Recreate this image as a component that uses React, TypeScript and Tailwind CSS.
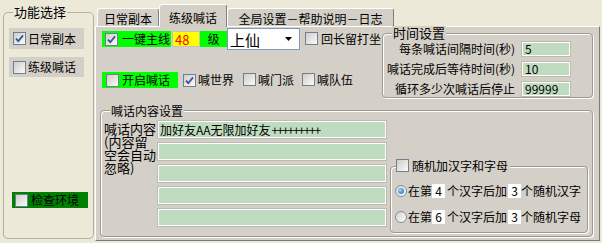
import React from "react";

const Check = ({ checked = false }: { checked?: boolean }) => (
  <span className="relative inline-flex w-[13px] h-[13px] shrink-0 items-center justify-center border border-[#6f8096] bg-linear-to-br from-[#cfcdc5] to-[#fbfbf9]">
    {checked && (
      <svg width="11" height="11" viewBox="0 0 11 11">
        <path d="M2 5.6 L4.3 8.2 L9 2.4" fill="none" stroke="#3550a0" strokeWidth="1.8" />
      </svg>
    )}
  </span>
);

const Radio = ({ on = false }: { on?: boolean }) => (
  <span className="inline-flex w-[12px] h-[12px] shrink-0 items-center justify-center rounded-full border border-[#7d8ea6] bg-linear-to-br from-[#d3d1c9] to-white">
    {on && <span className="w-[6px] h-[6px] rounded-full bg-[radial-gradient(circle_at_35%_35%,#9fd4ff,#1a5cb0)]" />}
  </span>
);

const Group = ({ className, children }: { className: string; children: React.ReactNode }) => (
  <div className={"relative border border-[#9d9a90] rounded-[4px] shadow-[inset_1px_1px_0_#fff,1px_1px_0_#fff] " + className}>
    {children}
  </div>
);

const timeRows = [
  { label: "每条喊话间隔时间(秒)", value: "5" },
  { label: "喊话完成后等待时间(秒)", value: "10" },
  { label: "循环多少次喊话后停止", value: "99999" },
];

const contentRows = ["加好友AA无限加好友", "", "", "", ""];

const randRows = [
  { on: true, a: "4", b: "3", tail: "个随机汉字" },
  { on: false, a: "6", b: "3", tail: "个随机字母" },
];

export default function App() {
  return (
    <div className="w-[602px] h-[243px] overflow-hidden bg-[#ECE9D8] flex text-[12px] leading-none text-black font-['Noto_Sans_CJK_SC','Noto_Sans',sans-serif]">
      {/* left: 功能选择 */}
      <div className="w-[95px] shrink-0 pl-[3px] pr-[1px] pt-[12px] pb-[4px] flex">
        <div className="relative flex-1 border border-[#b3b0a0] rounded-[5px] flex flex-col">
          <span className="absolute left-[9px] -top-[9px] px-[1px] bg-[#ECE9D8] text-[13px] leading-[16px]">功能选择</span>
          <div className="ml-[5px] mt-[15px] w-[75px] h-[21px] bg-[#D4D0C8] flex items-center pl-[4px] gap-[2px]">
            <Check checked />
            <span>日常副本</span>
          </div>
          <div className="ml-[5px] mt-[8px] w-[75px] h-[20px] bg-[#D4D0C8] flex items-center pl-[4px] gap-[2px]">
            <Check />
            <span>练级喊话</span>
          </div>
          <div className="ml-[8px] mt-auto mb-[30px] w-[76px] h-[16px] bg-[#008000] flex items-center pl-[3px] gap-[3px]">
            <Check />
            <span>检查环境</span>
          </div>
        </div>
      </div>

      {/* right: tabs */}
      <div className="w-[505px] shrink-0 flex flex-col pb-[2px]">
        <div className="h-[26px] flex items-end pl-[2px]">
          <div className="w-[62px] h-[18px] pt-[4px] flex justify-center bg-[#D4D0C8] border-t border-l border-white border-r border-r-[#808080] rounded-t-[3px]">
            日常副本
          </div>
          <div className="relative z-10 -mb-[1px] w-[68px] h-[23px] pt-[7px] flex justify-center bg-[#D4D0C8] border-t border-l border-white border-r border-r-[#808080] rounded-t-[3px]">
            练级喊话
          </div>
          <div className="w-[167px] h-[18px] pt-[4px] flex justify-center bg-[#D4D0C8] border-t border-l border-white border-r border-r-[#808080] rounded-t-[3px]">
            全局设置－帮助说明－日志
          </div>
        </div>

        <div className="flex-1 bg-[#D4D0C8] border border-t-white border-l-white border-r-[#7a7a7a] border-b-[#7a7a7a] flex flex-col">
          <div className="h-[83px] flex">
            <div className="w-[286px] pl-[6px] flex flex-col">
              <div className="mt-[1px] h-[22px] flex items-center">
                <div className="w-[69px] h-[16px] bg-[#00FF00] flex items-center pl-[3px] gap-[4px]">
                  <Check checked />
                  <span>一键主线</span>
                </div>
                <div className="ml-[1px] w-[28px] h-[16px] bg-[#FFFF00] border border-[#c4c2ba] text-[#FF0000] text-[13px] pl-[2px] flex items-center">48</div>
                <div className="w-[27px] h-[16px] bg-[#00FF00] flex items-center justify-center">级</div>
                <div className="w-[73px] h-[22px] bg-white border border-[#7F9DB9] flex items-center pl-[2px] text-[15px]">
                  <span>上仙</span>
                  <svg className="ml-auto mr-[7px]" width="7" height="4" viewBox="0 0 7 4">
                    <polygon points="0,0 7,0 3.5,4" fill="#000" />
                  </svg>
                </div>
                <span className="ml-[5px]"><Check /></span>
                <span className="ml-[3px]">回长留打坐</span>
              </div>
              <div className="mt-[22px] h-[16px] flex items-center">
                <div className="w-[76px] h-[16px] bg-[#00FF00] flex items-center pl-[4px] gap-[3px]">
                  <Check />
                  <span>开启喊话</span>
                </div>
                <span className="ml-[5px]"><Check checked /></span>
                <span className="ml-[2px]">喊世界</span>
                <span className="ml-[9px]"><Check /></span>
                <span className="ml-[2px]">喊门派</span>
                <span className="ml-[8px]"><Check /></span>
                <span className="ml-[2px]">喊队伍</span>
              </div>
            </div>

            <Group className="mt-[6px] w-[211px] h-[65px] pt-[8px] flex flex-col gap-[6px]">
              <span className="absolute left-[9px] -top-[8px] px-[1px] bg-[#D4D0C8] text-[13px] leading-[14px]">时间设置</span>
              {timeRows.map((r) => (
                <div key={r.label} className="h-[14px] flex items-center">
                  <span className="w-[132px] text-right">{r.label}</span>
                  <span className="ml-[7px] w-[48px] h-[14px] bg-[#C0DCC0] border border-white ring-1 ring-[#bdbab2] pl-[2px] flex items-center">{r.value}</span>
                </div>
              ))}
            </Group>
          </div>

          <Group className="ml-[4px] w-[493px] h-[127px] flex">
            <span className="absolute left-[9px] -top-[7px] px-[1px] bg-[#D4D0C8] leading-[13px]">喊话内容设置</span>
            <div className="w-[55px] pl-[3px] pt-[11px] text-[13px] leading-[13px] flex flex-col">
              <span className="h-[13px]">喊话内容</span>
              <span className="h-[13px]">(内容留</span>
              <span className="h-[13px]">空会自动</span>
              <span className="h-[13px]">忽略)</span>
            </div>
            <div className="ml-[2px] w-[228px] pt-[10px] flex flex-col gap-[5px]">
              {contentRows.map((t, i) => (
                <div key={i} className="h-[17px] bg-[#C0DCC0] border border-white ring-1 ring-[#bdbab2] pl-[1px] flex items-center">
                  {t}
                  {i === 0 && <span className="ml-[1px] tracking-[-1.3px]">+++++++++</span>}
                </div>
              ))}
            </div>
            <Group className="ml-[4px] mb-[3px] self-end w-[198px] h-[67px] pt-[16px] pl-[4px] flex flex-col gap-[10px]">
              <div className="absolute left-[5px] -top-[8px] pr-[2px] bg-[#D4D0C8] flex items-center gap-[3px]">
                <Check />
                <span>随机加汉字和字母</span>
              </div>
              {randRows.map((r) => (
                <div key={r.tail} className="h-[16px] flex items-center">
                  <Radio on={r.on} />
                  <span className="ml-[1px]">在第</span>
                  <span className="w-[13px] h-[14px] bg-white flex items-center justify-center">{r.a}</span>
                  <span className="ml-[2px]">个汉字后加</span>
                  <span className="ml-[1px] w-[13px] h-[14px] bg-white flex items-center justify-center">{r.b}</span>
                  <span>{r.tail}</span>
                </div>
              ))}
            </Group>
          </Group>
        </div>
      </div>
    </div>
  );
}
